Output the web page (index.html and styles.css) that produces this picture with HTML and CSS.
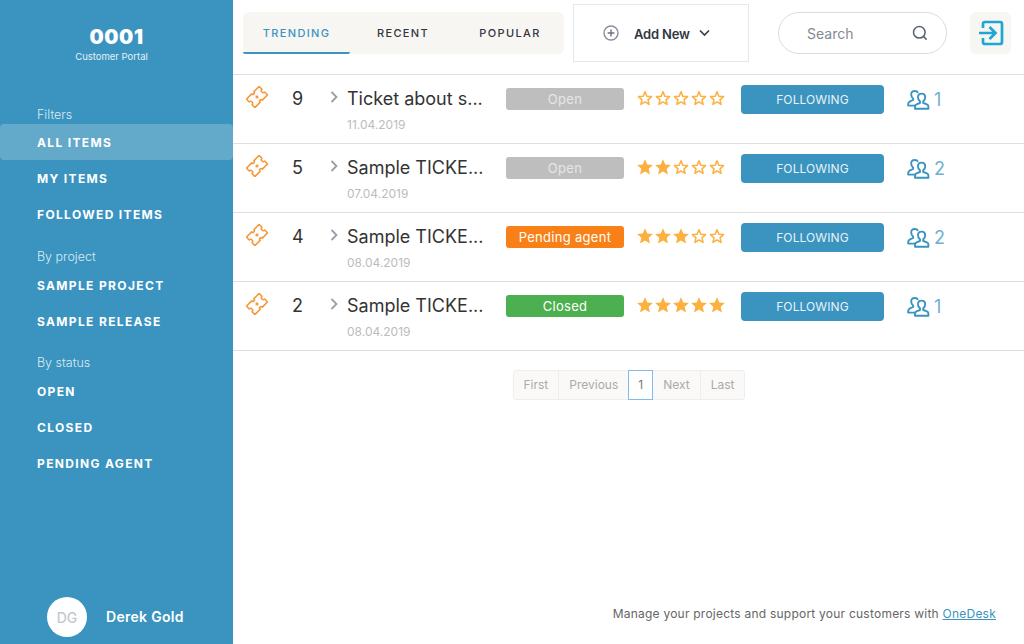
FILE: index.html
```html
<!DOCTYPE html>
<html lang="en">

<head>
    <meta charset="UTF-8">
    <meta name="viewport" content="width=device-width, initial-scale=1.0">
    <title>Customer Portal</title>
    <link rel="stylesheet" href="styles.css">
</head>

<body>
    <svg class="defs" width="0" height="0">
        <symbol id="ticket" viewBox="0 0 22 22">
            <g transform="translate(11 11) rotate(-45)" fill="none" stroke="#f59a3c" stroke-linejoin="round">
                <path d="M-9 -6 H-1.6 A1.6 1.6 0 0 0 1.6 -6 H9 V-2 A2 2 0 0 0 9 2 V6 H1.6 A1.6 1.6 0 0 0 -1.6 6 H-9 V2 A2 2 0 0 0 -9 -2 Z" stroke-width="1.6" />
                <path d="M0 -1.8 V1.8 M-1.8 0 H1.8" stroke-width="1.3" />
            </g>
        </symbol>
        <symbol id="star-full" viewBox="0 0 16 16">
            <path d="M8 1 L10 5.7 L15 6.2 L11.3 9.6 L12.4 14.6 L8 12 L3.6 14.6 L4.7 9.6 L1 6.2 L6 5.7 Z" fill="#fbb040" />
        </symbol>
        <symbol id="star-empty" viewBox="0 0 16 16">
            <path d="M8 2.4 L9.6 6.4 L13.8 6.8 L10.7 9.6 L11.6 13.7 L8 11.5 L4.4 13.7 L5.3 9.6 L2.2 6.8 L6.4 6.4 Z" fill="none" stroke="#fbb040" stroke-width="1.4" stroke-linejoin="round" />
        </symbol>
        <symbol id="people" viewBox="0 0 24 20">
            <path d="M8.4 15.6 H1.2 V14 Q1.2 12.2 3 11.4 L6.2 10 V8.8 Q4.2 7.2 4.2 4.6 Q4.2 1 7.8 1 Q10.2 1 11 2.8" fill="none" stroke="#3a94bf" stroke-width="1.9" stroke-linejoin="round" />
            <path d="M8 18.8 V16.6 Q8 15 10 14.2 L13 13 V11.4 Q11 10 11 7.2 Q11 3.6 14.6 3.6 Q18.2 3.6 18.2 7.2 Q18.2 10 16.2 11.4 V13 L19.4 14.2 Q21.4 15 21.4 16.6 V18.8 Z" fill="none" stroke="#3a94bf" stroke-width="1.9" stroke-linejoin="round" />
        </symbol>
    </svg>

    <div class="app">
        <div class="sidebar">
            <div class="brand">
                <div class="brand-name">0001</div>
                <div class="brand-sub">Customer Portal</div>
            </div>

            <div class="nav-title">Filters</div>
            <a class="nav-item active">ALL ITEMS</a>
            <a class="nav-item">MY ITEMS</a>
            <a class="nav-item">FOLLOWED ITEMS</a>

            <div class="nav-title by-project">By project</div>
            <a class="nav-item">SAMPLE PROJECT</a>
            <a class="nav-item">SAMPLE RELEASE</a>

            <div class="nav-title by-status">By status</div>
            <a class="nav-item">OPEN</a>
            <a class="nav-item">CLOSED</a>
            <a class="nav-item">PENDING AGENT</a>

            <div class="user">
                <div class="avatar">DG</div>
                <div class="user-name">Derek Gold</div>
            </div>
        </div>

        <div class="main">
            <div class="header">
                <div class="tabs">
                    <div class="tab active">TRENDING</div>
                    <div class="tab">RECENT</div>
                    <div class="tab">POPULAR</div>
                </div>
                <div class="add-new">
                    <svg class="add-icon" width="16" height="16" viewBox="0 0 16 16">
                        <circle cx="8" cy="8" r="7" fill="none" stroke="#8a8d9c" stroke-width="1.4" />
                        <path d="M8 4.6 V11.4 M4.6 8 H11.4" stroke="#6f7280" stroke-width="1.4" />
                    </svg>
                    <span class="add-label">Add New</span>
                    <svg width="11" height="8" viewBox="0 0 11 8">
                        <path d="M1 1.5 L5.5 6 L10 1.5" fill="none" stroke="#3a3f50" stroke-width="1.7" />
                    </svg>
                </div>
                <div class="search">
                    <span class="search-text">Search</span>
                    <svg width="16" height="16" viewBox="0 0 16 16">
                        <circle cx="7.3" cy="7.3" r="5.8" fill="none" stroke="#5a6270" stroke-width="1.5" />
                        <path d="M11.4 11.4 L14.6 14.6" stroke="#5a6270" stroke-width="1.5" />
                    </svg>
                </div>
                <div class="login">
                    <svg width="26" height="26" viewBox="0 0 26 26">
                        <path d="M5 8 V4 Q5 2 7 2 H22 Q24 2 24 4 V22 Q24 24 22 24 H7 Q5 24 5 22 V18" fill="none" stroke="#1ea7d4" stroke-width="2.7" />
                        <path d="M1 13 H17 M11.5 7 L17.5 13 L11.5 19" fill="none" stroke="#1ea7d4" stroke-width="2.7" />
                    </svg>
                </div>
            </div>

            <div class="row">
                <svg class="ticket"><use href="#ticket" /></svg>
                <div class="number">9</div>
                <svg class="chevron" viewBox="0 0 8 12"><path d="M1.5 1 L6.5 6 L1.5 11" fill="none" stroke="#9a9ea6" stroke-width="1.8" /></svg>
                <div class="ticket-info">
                    <div class="ticket-title">Ticket about s...</div>
                    <div class="ticket-date">11.04.2019</div>
                </div>
                <div class="badge badge-open">Open</div>
                <div class="stars">
                    <svg><use href="#star-empty" /></svg><svg><use href="#star-empty" /></svg><svg><use href="#star-empty" /></svg><svg><use href="#star-empty" /></svg><svg><use href="#star-empty" /></svg>
                </div>
                <button class="follow">FOLLOWING</button>
                <div class="followers"><svg><use href="#people" /></svg><span>1</span></div>
            </div>

            <div class="row">
                <svg class="ticket"><use href="#ticket" /></svg>
                <div class="number">5</div>
                <svg class="chevron" viewBox="0 0 8 12"><path d="M1.5 1 L6.5 6 L1.5 11" fill="none" stroke="#9a9ea6" stroke-width="1.8" /></svg>
                <div class="ticket-info">
                    <div class="ticket-title">Sample TICKE...</div>
                    <div class="ticket-date">07.04.2019</div>
                </div>
                <div class="badge badge-open">Open</div>
                <div class="stars">
                    <svg><use href="#star-full" /></svg><svg><use href="#star-full" /></svg><svg><use href="#star-empty" /></svg><svg><use href="#star-empty" /></svg><svg><use href="#star-empty" /></svg>
                </div>
                <button class="follow">FOLLOWING</button>
                <div class="followers"><svg><use href="#people" /></svg><span>2</span></div>
            </div>

            <div class="row">
                <svg class="ticket"><use href="#ticket" /></svg>
                <div class="number">4</div>
                <svg class="chevron" viewBox="0 0 8 12"><path d="M1.5 1 L6.5 6 L1.5 11" fill="none" stroke="#9a9ea6" stroke-width="1.8" /></svg>
                <div class="ticket-info">
                    <div class="ticket-title">Sample TICKE...</div>
                    <div class="ticket-date">08.04.2019</div>
                </div>
                <div class="badge badge-pending">Pending agent</div>
                <div class="stars">
                    <svg><use href="#star-full" /></svg><svg><use href="#star-full" /></svg><svg><use href="#star-full" /></svg><svg><use href="#star-empty" /></svg><svg><use href="#star-empty" /></svg>
                </div>
                <button class="follow">FOLLOWING</button>
                <div class="followers"><svg><use href="#people" /></svg><span>2</span></div>
            </div>

            <div class="row">
                <svg class="ticket"><use href="#ticket" /></svg>
                <div class="number">2</div>
                <svg class="chevron" viewBox="0 0 8 12"><path d="M1.5 1 L6.5 6 L1.5 11" fill="none" stroke="#9a9ea6" stroke-width="1.8" /></svg>
                <div class="ticket-info">
                    <div class="ticket-title">Sample TICKE...</div>
                    <div class="ticket-date">08.04.2019</div>
                </div>
                <div class="badge badge-closed">Closed</div>
                <div class="stars">
                    <svg><use href="#star-full" /></svg><svg><use href="#star-full" /></svg><svg><use href="#star-full" /></svg><svg><use href="#star-full" /></svg><svg><use href="#star-full" /></svg>
                </div>
                <button class="follow">FOLLOWING</button>
                <div class="followers"><svg><use href="#people" /></svg><span>1</span></div>
            </div>

            <div class="pagination">
                <div class="page">First</div>
                <div class="page">Previous</div>
                <div class="page current">1</div>
                <div class="page">Next</div>
                <div class="page">Last</div>
            </div>

            <div class="footer">Manage your projects and support your customers with <a class="footer-link">OneDesk</a></div>
        </div>
    </div>
</body>

</html>
```

FILE: styles.css
```css
html,
body {
    height: 100%;
    margin: 0;
    padding: 0;
}

body {
    font-family: Inter, "Open Sans", sans-serif;
    color: #333;
    background-color: white;
}

.defs {
    position: absolute;
}

.app {
    height: 644px;
    display: flex;
    overflow: hidden;
}

/* sidebar */

.sidebar {
    width: 233px;
    flex-shrink: 0;
    background-color: #3a94bf;
    color: white;
    display: flex;
    flex-direction: column;
}

.brand {
    height: 105px;
    padding-top: 25px;
    box-sizing: border-box;
    text-align: center;
}

.brand-name {
    font-size: 20px;
    line-height: 24px;
    font-weight: 900;
    letter-spacing: 0.6px;
}

.brand-sub {
    font-size: 9.5px;
    line-height: 12px;
    margin-top: 2px;
    padding-right: 10px;
    color: #e4f0f6;
}

.nav-title {
    height: 18px;
    line-height: 20px;
    margin-bottom: 1px;
    padding-left: 37px;
    font-size: 12.5px;
    font-weight: 300;
    color: #dcebf3;
}

.nav-title.by-project {
    margin: 15px 0 2px;
}

.nav-title.by-status {
    margin: 14px 0 2px;
}

.nav-item {
    height: 36px;
    line-height: 37px;
    padding-left: 37px;
    font-size: 12px;
    font-weight: 700;
    letter-spacing: 1.35px;
    border-radius: 4px;
}

.nav-item.active {
    background-color: #62a9ca;
}

.user {
    margin-top: auto;
    padding: 0 0 7px 47px;
    display: flex;
    align-items: center;
    gap: 19px;
}

.avatar {
    width: 40px;
    height: 40px;
    border-radius: 50%;
    background-color: white;
    color: #c5c8d2;
    font-size: 14px;
    font-weight: 500;
    display: flex;
    justify-content: center;
    align-items: center;
}

.user-name {
    font-size: 14px;
    font-weight: 600;
    letter-spacing: 0.3px;
    margin-top: -2px;
}

/* main */

.main {
    flex: 1;
    display: flex;
    flex-direction: column;
}

.header {
    height: 75px;
    box-sizing: border-box;
    border-bottom: 1px solid #dfdfdf;
    display: flex;
    align-items: flex-start;
    padding: 4px 0 0 10px;
}

.tabs {
    width: 321px;
    height: 42px;
    margin-top: 8px;
    background-color: #f8f6f3;
    border-radius: 6px;
    display: flex;
}

.tab {
    height: 42px;
    box-sizing: border-box;
    line-height: 43px;
    text-align: center;
    font-size: 11px;
    font-weight: 500;
    letter-spacing: 1.35px;
    color: #33363f;
}

.tab:nth-child(1) {
    width: 107px;
}

.tab:nth-child(2) {
    width: 106px;
}

.tab:nth-child(3) {
    width: 108px;
}

.tab.active {
    color: #3a94bf;
    border-bottom: 2px solid #3a94bf;
    border-radius: 0 0 2px 2px;
}

.add-new {
    width: 176px;
    height: 58px;
    box-sizing: border-box;
    margin-left: 9px;
    border: 1px solid #e3e8f0;
    display: flex;
    align-items: center;
    padding-left: 29px;
}

.add-icon {
    margin-right: 15px;
}

.add-label {
    font-size: 13px;
    font-weight: 600;
    letter-spacing: -0.2px;
    color: #33363f;
    margin: 2px 9px 0 0;
}

.search {
    width: 169px;
    height: 42px;
    box-sizing: border-box;
    margin: 8px 0 0 29px;
    border: 1px solid #dcdcdc;
    border-radius: 21px;
    display: flex;
    align-items: center;
    justify-content: space-between;
    padding: 0 18px 0 28px;
}

.search-text {
    font-size: 14px;
    color: #858a92;
}

.login {
    width: 41px;
    height: 42px;
    margin: 8px 0 0 23px;
    background-color: #f8f6f3;
    border-radius: 6px;
    display: flex;
    justify-content: center;
    align-items: center;
}

/* ticket rows */

.row {
    height: 69px;
    box-sizing: border-box;
    border-bottom: 1px solid #dfdfdf;
    display: flex;
    align-items: flex-start;
    padding-left: 13px;
}

.ticket {
    width: 22px;
    height: 22px;
    margin-top: 11px;
}

.number {
    width: 15px;
    margin-left: 24px;
    margin-top: 12px;
    font-size: 18px;
    line-height: 24px;
    color: #333;
}

.chevron {
    width: 8px;
    height: 12px;
    margin-left: 23px;
    margin-top: 16px;
}

.ticket-info {
    width: 159px;
    margin-left: 9px;
}

.ticket-title {
    margin-top: 12px;
    font-size: 18px;
    line-height: 24px;
    color: #333;
    white-space: nowrap;
}

.ticket-date {
    margin-top: 6px;
    font-size: 12px;
    line-height: 16px;
    color: #bcbcbc;
}

.badge {
    width: 118px;
    height: 22px;
    margin-top: 13px;
    border-radius: 3px;
    text-align: center;
    font-size: 13px;
    line-height: 22px;
    letter-spacing: 0.3px;
    color: white;
}

.badge-open {
    background-color: #bebebe;
    color: #e6e6e6;
}

.badge-pending {
    background-color: #f97f17;
}

.badge-closed {
    background-color: #4caf50;
}

.stars {
    width: 90px;
    margin: 14px 0 0 12px;
    display: flex;
}

.stars svg {
    width: 18px;
    height: 18px;
    flex-shrink: 0;
}

.follow {
    width: 143px;
    height: 29px;
    margin: 10px 0 0 15px;
    padding: 0;
    border: none;
    border-radius: 4px;
    background-color: #3a94bf;
    color: #e8f2f7;
    font-family: inherit;
    font-size: 12px;
    font-weight: 400;
    letter-spacing: 0.1px;
}

.followers {
    margin: 14px 0 0 23px;
    display: flex;
    align-items: center;
    gap: 3px;
    color: #6fb0d0;
    font-size: 18px;
}

.followers svg {
    width: 24px;
    height: 20px;
}

/* pagination */

.pagination {
    margin: 19px 0 0 2px;
    align-self: center;
    display: flex;
}

.page {
    height: 28px;
    line-height: 28px;
    padding: 0 10px;
    background-color: #faf9f7;
    border: 1px solid #eeeeee;
    margin-left: -1px;
    font-size: 12px;
    color: #aaaaaa;
}

.page:first-child {
    border-radius: 3px 0 0 3px;
}

.page:last-child {
    border-radius: 0 3px 3px 0;
}

.page.current {
    padding: 0 9px;
    background-color: white;
    border-color: #7fbbec;
    color: #777;
    position: relative;
    z-index: 1;
}

.footer {
    margin-top: auto;
    padding: 0 28px 22px 0;
    text-align: right;
    font-size: 12px;
    letter-spacing: 0.23px;
    line-height: 16px;
    color: #666;
}

.footer-link {
    color: #3a94bf;
    text-decoration: underline;
}
```
